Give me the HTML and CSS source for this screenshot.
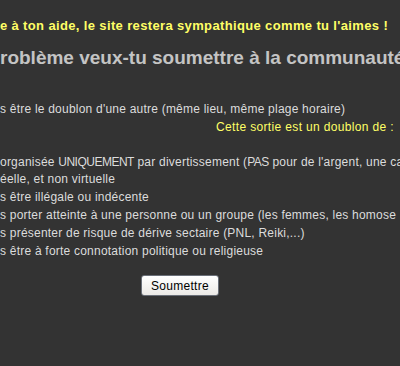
FILE: index.html
```html
<!DOCTYPE html>
<html lang="fr">
<head>
<meta charset="utf-8">
<link rel="stylesheet" href="styles.css">
</head>
<body>
<div class="page">
  <p class="intro">e à ton aide, le site restera sympathique comme tu l'aimes !</p>
  <h1 class="title">roblème veux-tu soumettre à la communauté</h1>
  <div class="group first">
    <p class="line">s être le doublon d'une autre (même lieu, même plage horaire)</p>
    <p class="line note">Cette sortie est un doublon de :</p>
  </div>
  <div class="group">
    <p class="line">organisée <span class="caps">UNIQUEMENT</span> par divertissement (<span class="caps">PAS</span> pour de l'argent, une ca</p>
    <p class="line">éelle, et non virtuelle</p>
    <p class="line">s être illégale ou indécente</p>
    <p class="line">s porter atteinte à une personne ou un groupe (les femmes, les homose</p>
    <p class="line">s présenter de risque de dérive sectaire (PNL, Reiki,...)</p>
    <p class="line">s être à forte connotation politique ou religieuse</p>
  </div>
  <div class="actions">
    <button class="submit" type="button">Soumettre</button>
  </div>
</div>
</body>
</html>
```
FILE: styles.css
```css
html, body {
  margin: 0;
  padding: 0;
  background: #333333;
  overflow: hidden;
}
.page {
  width: 400px;
  height: 366px;
  overflow: hidden;
  font-family: "Liberation Sans", Arial, sans-serif;
}
p, h1 {
  margin: 0;
  white-space: nowrap;
}
.intro {
  margin-top: 17px;
  font-size: 13px;
  line-height: 18px;
  font-weight: bold;
  letter-spacing: 0.36px;
  color: #ffff66;
}
.title {
  margin-top: 11px;
  font-size: 19px;
  line-height: 24px;
  font-weight: bold;
  color: #c4c4c4;
}
.group.first {
  margin-top: 31px;
}
.group {
  margin-top: 17px;
}
.line {
  font-size: 12px;
  line-height: 17.8px;
  letter-spacing: 0.22px;
  color: #dcdcdc;
}
.caps {
  letter-spacing: -0.5px;
}
.note {
  color: #ffff66;
  text-align: right;
  padding-right: 6px;
  letter-spacing: 0.35px;
}
.actions {
  margin-top: 15px;
  display: flex;
  justify-content: center;
  padding-right: 40px;
}
.submit {
  width: 78px;
  height: 21px;
  padding: 0;
  font-family: "Liberation Sans", Arial, sans-serif;
  font-size: 12px;
  letter-spacing: 0.3px;
  color: #000;
  background: linear-gradient(#ffffff, #eceae6);
  border: 1px solid #6a6f78;
  border-radius: 3px;
}
```
